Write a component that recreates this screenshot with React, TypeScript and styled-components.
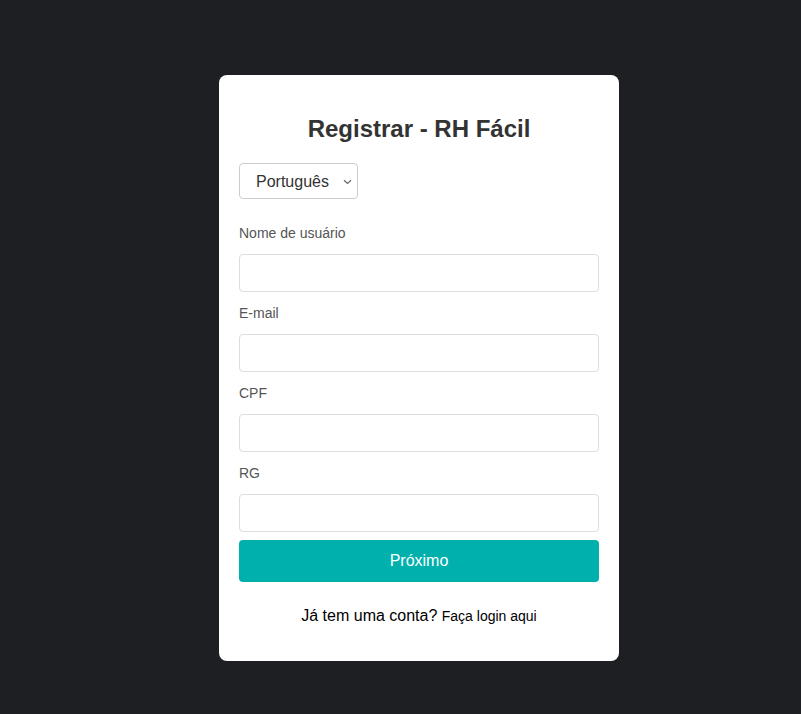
import React from "react";
import styled, { createGlobalStyle } from "styled-components";

const Global = createGlobalStyle`
  html, body { margin: 0; padding: 0; background: #1e1f22; }
  body { font-family: "Liberation Sans", Arial, sans-serif; }
  * { box-sizing: border-box; }
`;

const Page = styled.div`
  min-height: 714px;
  display: flex;
  justify-content: center;
  align-items: flex-start;
  padding-top: 75px;
  padding-left: 37px;
`;

const Card = styled.div`
  width: 400px;
  background: #ffffff;
  border-radius: 8px;
  padding: 20px 20px 36px;
  display: flex;
  flex-direction: column;
`;

const Title = styled.h2`
  margin: 20px 0 20px;
  font-size: 24px;
  line-height: 28px;
  font-weight: bold;
  color: #333333;
  text-align: center;
`;

const SelectWrap = styled.div`
  position: relative;
  align-self: flex-start;
  width: 119px;
  height: 36px;
  margin-bottom: 26px;
`;

const LangSelect = styled.select`
  appearance: none;
  -webkit-appearance: none;
  width: 100%;
  height: 100%;
  padding: 0 24px 0 16px;
  font-family: "Liberation Sans", Arial, sans-serif;
  font-size: 16px;
  color: #333;
  background: #fff;
  border: 1px solid #cccccc;
  border-radius: 4px;
  outline: none;
`;

const Chevron = styled.svg`
  position: absolute;
  right: 6px;
  top: 16px;
  pointer-events: none;
`;

const Field = styled.div`
  display: flex;
  flex-direction: column;
`;

const Label = styled.label`
  font-size: 14px;
  line-height: 16px;
  color: #555555;
  margin-bottom: 13px;
`;

const Input = styled.input`
  width: 100%;
  height: 38px;
  border: 1px solid #dddddd;
  border-radius: 4px;
  padding: 0 10px;
  font-size: 14px;
  margin-bottom: 13px;
`;

const Button = styled.button`
  width: 100%;
  height: 42px;
  margin-top: -5px;
  background: #00b0ad;
  color: #ffffff;
  border: none;
  border-radius: 4px;
  font-family: "Liberation Sans", Arial, sans-serif;
  font-size: 16px;
`;

const Footer = styled.p`
  margin: 25px 0 0;
  text-align: center;
  font-size: 16px;
  line-height: 18px;
  color: #000;
`;

const LoginLink = styled.a`
  font-size: 14px;
  color: #000;
  text-decoration: none;
`;

const fields = ["Nome de usuário", "E-mail", "CPF", "RG"];

export default function App() {
  return (
    <>
      <Global />
      <Page>
        <Card>
          <Title>Registrar - RH Fácil</Title>
          <SelectWrap>
            <LangSelect defaultValue="pt">
              <option value="pt">Português</option>
              <option value="en">English</option>
              <option value="es">Español</option>
            </LangSelect>
            <Chevron width="9" height="6" viewBox="0 0 9 6">
              <path d="M1 1.2 L4.5 4.5 L8 1.2" fill="none" stroke="#666" strokeWidth="1.2" />
            </Chevron>
          </SelectWrap>
          {fields.map((f) => (
            <Field key={f}>
              <Label>{f}</Label>
              <Input type="text" />
            </Field>
          ))}
          <Button>Próximo</Button>
          <Footer>
            Já tem uma conta? <LoginLink href="#">Faça login aqui</LoginLink>
          </Footer>
        </Card>
      </Page>
    </>
  );
}
